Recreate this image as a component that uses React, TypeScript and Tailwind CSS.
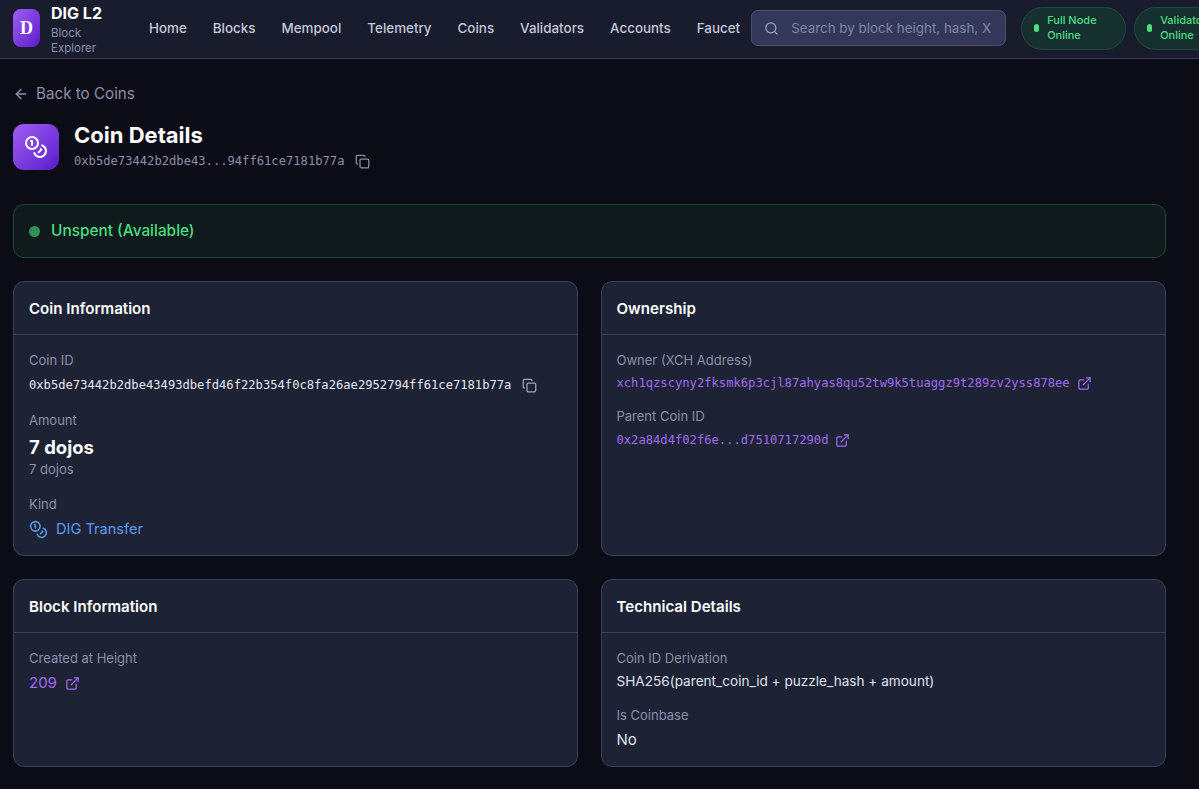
import React from "react";
import { ArrowLeft, Copy, ExternalLink, Search, Coins } from "lucide-react";

const sans = "font-['Inter',sans-serif]";
const mono = "font-['DejaVu_Sans_Mono',monospace] text-[12.15px]";

function Pill({ a, b }: { a: string; b: string }) {
  return (
    <div className="flex items-center gap-[8px] h-[43px] w-[105px] shrink-0 rounded-full border border-[#1f4a3f] bg-[#16302f] pl-[12px] text-[#4ade80] text-[11px] leading-[15px] font-medium">
      <span className="w-[5px] h-[8px] rounded-full bg-[#4ade80] shrink-0" />
      <div className="whitespace-nowrap">{a}<br />{b}</div>
    </div>
  );
}

function Card({ title, className, children }: { title: string; className: string; children: React.ReactNode }) {
  return (
    <section className={`rounded-[11px] border border-[#3a3f5c] bg-[#1e2235] ${className}`}>
      <h2 className="h-[53px] flex items-center px-[15px] pt-[2px] border-b border-[#3a3f5c] text-white font-semibold text-[15.1px]">{title}</h2>
      <div className="px-[15px] pt-[15px]">{children}</div>
    </section>
  );
}

const Label = ({ children, className = "" }: { children: React.ReactNode; className?: string }) => (
  <div className={`text-[13px] leading-[20px] text-[#8b90a8] ${className}`}>{children}</div>
);

export default function App() {
  const nav = ["Home", "Blocks", "Mempool", "Telemetry", "Coins", "Validators", "Accounts", "Faucet"];
  return (
    <div className={`${sans} w-[1199px] h-[789px] overflow-hidden bg-[#0b0c15] text-[#c8cce0]`}>
      <header className="h-[59px] flex items-center border-b border-[#3a3f5c] bg-[#191c2c] pl-[13px] pb-[2px] whitespace-nowrap">
        <div className="w-[27px] h-[38px] rounded-[8px] bg-gradient-to-br from-[#a15cf6] to-[#5b16c9] flex items-center justify-center text-white font-bold text-[18px] font-['Liberation_Serif',serif] shrink-0">D</div>
        <div className="ml-[11px] w-[98px] shrink-0 mt-[3px]">
          <div className="text-white font-bold text-[16px] leading-[20px]">DIG L2</div>
          <div className="mt-[3px] text-[11.5px] leading-[15px] text-[#8b90a8]">Block<br />Explorer</div>
        </div>
        <nav className="flex gap-[26px] text-[13.4px] font-medium text-[#c3c7db] shrink-0">
          {nav.map((n) => <span key={n}>{n}</span>)}
        </nav>
        <div className="ml-[11px] w-[255px] h-[36px] shrink-0 flex items-center gap-[12px] rounded-[7px] border border-[#4a4f70] bg-[#33375a] px-[12px] text-[13.4px] text-[#8085a5] overflow-hidden">
          <Search size={15} className="text-[#a0a4bc] shrink-0" />
          <span>Search by block height, hash, X</span>
        </div>
        <div className="ml-[15px] flex gap-[8px] shrink-0">
          <Pill a="Full Node" b="Online" />
          <Pill a="Validator" b="Online" />
        </div>
      </header>

      <main className="w-[1166px] pl-[13px] pt-[25px]">
        <div className="flex items-center gap-[7px] text-[15.2px] leading-[20px] text-[#8b90a8]">
          <ArrowLeft size={16} />
          <span>Back to Coins</span>
        </div>

        <div className="mt-[19px] flex items-center gap-[15px]">
          <div className="w-[46px] h-[46px] rounded-[11px] bg-gradient-to-br from-[#a15cf6] to-[#5b16c9] flex items-center justify-center text-white">
            <Coins size={24} />
          </div>
          <div>
            <h1 className="text-[22px] leading-[24px] font-bold text-white">Coin Details</h1>
            <div className={`mt-[4px] flex items-center gap-[11px] ${mono} leading-[20px] text-[#8b90a8]`}>
              <span>0xb5de73442b2dbe43...94ff61ce7181b77a</span>
              <Copy size={15} />
            </div>
          </div>
        </div>

        <div className="mt-[33px] h-[54px] flex items-center gap-[11px] rounded-[11px] border border-[#1c4a34] bg-[#0e1a1c] px-[15px] text-[15.4px] font-medium text-[#4ade80]">
          <span className="w-[11px] h-[11px] rounded-full bg-[#2f8f57]" />
          Unspent (Available)
        </div>

        <div className="mt-[23px] grid grid-cols-[565px_565.5px] gap-x-[22.5px] gap-y-[23px]">
          <Card title="Coin Information" className="h-[275px]">
            <Label>Coin ID</Label>
            <div className={`mt-[5px] flex items-center gap-[11px] ${mono} leading-[20px] text-[#e6e8f2]`}>
              <span>0xb5de73442b2dbe43493dbefd46f22b354f0c8fa26ae2952794ff61ce7181b77a</span>
              <Copy size={15} className="text-[#a0a4bc]" />
            </div>
            <Label className="mt-[15px]">Amount</Label>
            <div className="mt-[5px] text-[18.5px] leading-[24px] font-bold text-white">7 dojos</div>
            <Label>7 dojos</Label>
            <Label className="mt-[15px]">Kind</Label>
            <div className="mt-[5px] flex items-center gap-[8px] text-[14.6px] leading-[20px] text-[#5b9cf6]">
              <Coins size={19} />
              DIG Transfer
            </div>
          </Card>

          <Card title="Ownership" className="h-[275px]">
            <Label>Owner (XCH Address)</Label>
            <div className={`mt-[3px] flex items-center gap-[7px] ${mono} leading-[20px] text-[#a06cf5]`}>
              <span>xch1qzscyny2fksmk6p3cjl87ahyas8qu52tw9k5tuaggz9t289zv2yss878ee</span>
              <ExternalLink size={15} />
            </div>
            <Label className="mt-[13px]">Parent Coin ID</Label>
            <div className={`mt-[4px] flex items-center gap-[7px] ${mono} leading-[20px] text-[#a06cf5]`}>
              <span>0x2a84d4f02f6e...d7510717290d</span>
              <ExternalLink size={15} />
            </div>
          </Card>

          <Card title="Block Information" className="h-[188px]">
            <Label>Created at Height</Label>
            <div className="mt-[5px] flex items-center gap-[8px] text-[15px] leading-[20px] text-[#a06cf5]">
              209
              <ExternalLink size={15} />
            </div>
          </Card>

          <Card title="Technical Details" className="h-[188px]">
            <Label>Coin ID Derivation</Label>
            <div className="mt-[3px] text-[13.6px] leading-[20px] text-[#dfe2ee]">SHA256(parent_coin_id + puzzle_hash + amount)</div>
            <Label className="mt-[14px]">Is Coinbase</Label>
            <div className="mt-[5px] text-[15px] leading-[20px] text-[#dfe2ee]">No</div>
          </Card>
        </div>
      </main>
    </div>
  );
}
